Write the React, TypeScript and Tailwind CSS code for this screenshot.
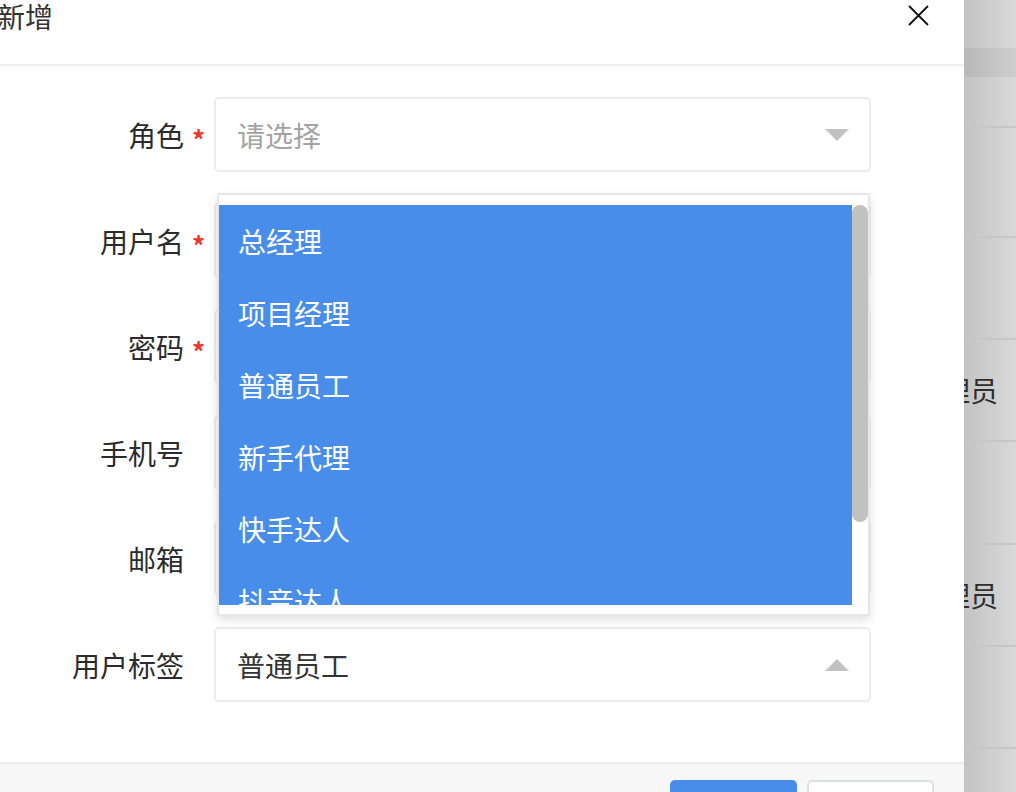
import React from "react";

const font = { fontFamily: '"Noto Sans CJK SC", "Noto Sans", sans-serif' };

const rows = [
  { label: "角色", required: true },
  { label: "用户名", required: true },
  { label: "密码", required: true },
  { label: "手机号", required: false },
  { label: "邮箱", required: false },
  { label: "用户标签", required: false },
];

const options = ["总经理", "项目经理", "普通员工", "新手代理", "快手达人", "抖音达人", "网红主播"];

function Caret({ up }: { up?: boolean }) {
  return up ? (
    <div className="w-0 h-0 border-l-[12px] border-r-[12px] border-b-[12px] border-l-transparent border-r-transparent border-b-[#c2c2c2]" />
  ) : (
    <div className="w-0 h-0 border-l-[12px] border-r-[12px] border-t-[12px] border-l-transparent border-r-transparent border-t-[#c2c2c2]" />
  );
}

export default function App() {
  return (
    <div className="flex w-[1016px] h-[792px] overflow-hidden bg-white text-[#333]" style={font}>
      {/* Modal */}
      <div className="relative z-10 flex flex-col w-[964px] h-full bg-white shrink-0">
        {/* Header */}
        <div className="flex items-start justify-between h-[66px] border-b-2 border-[#eeeeee] shrink-0">
          <span className="-ml-[3px] mt-[-1px] text-[28px] leading-[34px] text-[#333]">新增</span>
          <svg className="mr-[35px] mt-[5px]" width="21" height="21" viewBox="0 0 21 21">
            <path d="M1 1L20 20M20 1L1 20" stroke="#111" strokeWidth="1.8" />
          </svg>
        </div>

        {/* Body */}
        <div className="relative flex-1 flex flex-col gap-[31px] pt-[31px]">
          {rows.map((row, i) => (
            <div key={row.label} className="flex items-center h-[75px]">
              <div className="w-[184px] text-right text-[28px] leading-none text-[#2b2b2b]">{row.label}</div>
              <div className="w-[30px] flex justify-center pt-[8px] pr-[1px] text-[26px] font-bold leading-none text-[#f0352b]">
                {row.required ? "*" : ""}
              </div>
              <div className="flex items-center justify-between w-[657px] h-[75px] border-2 border-[#ececec] rounded-[5px] pl-[21px] pr-[20px]">
                <span className={`text-[28px] leading-none ${i === 0 ? "text-[#a3a3a3]" : "text-[#333]"}`}>
                  {i === 0 ? "请选择" : i === 5 ? "普通员工" : ""}
                </span>
                {(i === 0 || i === 5) && <Caret up={i === 5} />}
              </div>
            </div>
          ))}

          {/* Dropdown menu */}
          <div className="absolute left-[217px] top-[127px] w-[653px] h-[423px] bg-white border-2 border-[#e6e6e6] rounded-[3px] shadow-[0_4px_10px_rgba(0,0,0,0.12)] pt-[10px] pb-[9px]">
            <div className="flex h-full">
              <div className="flex-1 overflow-hidden bg-[#478de9]">
                {options.map((o) => (
                  <div key={o} className="h-[72px] flex items-center pl-[19px] text-[28px] leading-none text-white">
                    {o}
                  </div>
                ))}
              </div>
              <div className="w-[16px] bg-white">
                <div className="h-[317px] rounded-full bg-[#c1c1c1]" />
              </div>
            </div>
          </div>
        </div>

        {/* Footer */}
        <div className="flex justify-end gap-[10px] h-[30px] pt-[16px] pr-[30px] bg-[#f7f7f7] border-t-2 border-[#ececec] shrink-0">
          <div className="w-[127px] h-[40px] rounded-[5px] bg-[#478de9]" />
          <div className="w-[127px] h-[40px] rounded-[5px] bg-white border-2 border-[#dcdfe6]" />
        </div>
      </div>

      {/* Overlay behind modal */}
      <div className="flex-1 flex flex-col bg-gradient-to-r from-[#c3c3c3] to-[#d9d9d9]">
        <div className="h-[48px] shrink-0" />
        <div className="h-[29px] shrink-0 bg-black/5" />
        <div className="h-[51px] shrink-0 border-b-2 border-[#c6c6c6]" />
        <div className="h-[110px] shrink-0 border-b-2 border-[#c6c6c6]" />
        <div className="h-[102px] shrink-0 border-b-2 border-[#c6c6c6]" />
        <div className="h-[102px] shrink-0 border-b-2 border-[#c6c6c6] flex items-center">
          <span className="-ml-[22px] text-[28px] leading-none text-[#2e2e2e] whitespace-nowrap">理员</span>
        </div>
        <div className="h-[103px] shrink-0 border-b-2 border-[#c6c6c6]" />
        <div className="h-[102px] shrink-0 border-b-2 border-[#c6c6c6] flex items-center">
          <span className="-ml-[22px] text-[28px] leading-none text-[#2e2e2e] whitespace-nowrap">理员</span>
        </div>
        <div className="h-[102px] shrink-0 border-b-2 border-[#c6c6c6]" />
        <div className="flex-1" />
      </div>
    </div>
  );
}
